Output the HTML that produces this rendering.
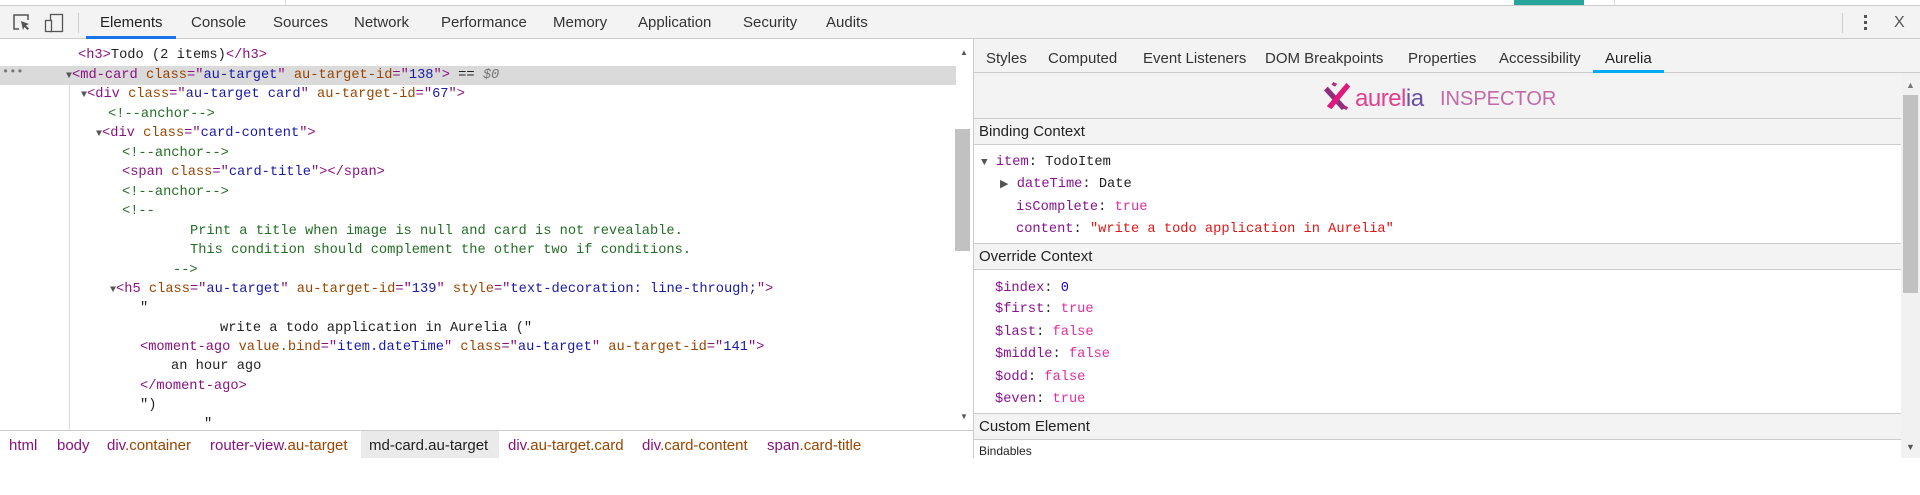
<!DOCTYPE html>
<html><head><meta charset="utf-8"><style>
*{margin:0;padding:0;box-sizing:border-box}
body{width:1920px;height:458px;overflow:hidden;background:#fff;position:relative;font-family:"Liberation Sans",sans-serif;}
.abs{position:absolute}
.tb{position:absolute;top:5px;left:0;width:1920px;height:34px;background:#f3f3f3;border-top:1px solid #ccc;border-bottom:1px solid #ccc}
.tab{position:absolute;top:14px;font-size:15px;color:#333}
.mono{font-family:"Liberation Mono",monospace;font-size:13.7px;white-space:pre}
.row{position:absolute;height:19.4px;line-height:19.4px}
.el .row{margin-top:2px}
.tg{color:#881280}.at{color:#994500}.av{color:#1a1aa6}.cm{color:#236e25}.tx{color:#222}
.tri{font-size:10px;color:#555}
.sec{position:absolute;left:974px;width:927px;height:27px;background:#f3f3f3;border-top:1px solid #ccc;border-bottom:1px solid #ccc;font-size:15px;line-height:25px;padding-left:5px;color:#222}
.k{color:#881391}.pk{color:#e0309e}.st{color:#e01616}.nb{color:#1c00cf}
.bc{position:absolute;top:437px;font-size:15px;color:#881280}
</style></head><body>
<div class="abs" style="left:285px;top:0;width:1px;height:5px;background:#ddd"></div>
<div class="abs" style="left:1514px;top:0;width:70px;height:5px;background:#26a69a"></div>
<div class="abs" style="left:1614px;top:0;width:1px;height:5px;background:#ddd"></div>
<div class="tb"></div>
<svg class="abs" style="left:12px;top:13px" width="20" height="20" viewBox="0 0 20 20"><path d="M7 16H2V2h14v5" fill="none" stroke="#555" stroke-width="1.5"/><path d="M9 8l8 3-3 1.5 3 3-1.5 1.5-3-3L11 17z" fill="#555"/></svg>
<svg class="abs" style="left:44px;top:13px" width="20" height="20" viewBox="0 0 20 20"><rect x="6.5" y="1.5" width="12" height="17" fill="none" stroke="#555" stroke-width="1.3"/><rect x="1.5" y="7.5" width="6" height="11" fill="#f3f3f3" stroke="#555" stroke-width="1.3"/></svg>
<div class="abs" style="left:78px;top:13px;width:1px;height:20px;background:#ccc"></div>
<div class="tab" style="left:100px;color:#222">Elements</div>
<div class="abs" style="left:86px;top:36px;width:90px;height:3px;background:#1a73e8"></div>
<div class="tab" style="left:191px">Console</div>
<div class="tab" style="left:273px">Sources</div>
<div class="tab" style="left:354px">Network</div>
<div class="tab" style="left:441px">Performance</div>
<div class="tab" style="left:553px">Memory</div>
<div class="tab" style="left:638px">Application</div>
<div class="tab" style="left:743px">Security</div>
<div class="tab" style="left:826px">Audits</div>
<div class="abs" style="left:1842px;top:13px;width:1px;height:20px;background:#ccc"></div>
<div class="abs" style="left:1864px;top:15px;width:3px;height:3px;background:#555;box-shadow:0 6px 0 #555,0 12px 0 #555"></div>
<div class="tab" style="left:1894px;top:14px;font-size:16px;color:#555">X</div>

<div class="abs" style="left:69px;top:85px;width:1px;height:345px;background:#ddd"></div>
<div class="abs" style="left:0;top:66px;width:956px;height:19.4px;background:#dadada"></div>
<div class="abs mono" style="left:2px;top:65px;color:#777;font-size:12px">•••</div>
<div class="mono el">
<div class="row" style="top:44px;left:78px"><span class="tg">&lt;h3&gt;</span><span class="tx">Todo (2 items)</span><span class="tg">&lt;/h3&gt;</span></div>
<div class="row" style="top:64px;left:66px"><span class="tri">▼</span><span class="tg">&lt;md-card</span> <span class="at">class</span><span class="tg">="</span><span class="av">au-target</span><span class="tg">"</span> <span class="at">au-target-id</span><span class="tg">="</span><span class="av">138</span><span class="tg">"&gt;</span><span class="tx"> == </span><span style="color:#777;font-style:italic">$0</span></div>
<div class="row" style="top:83px;left:81px"><span class="tri">▼</span><span class="tg">&lt;div</span> <span class="at">class</span><span class="tg">="</span><span class="av">au-target card</span><span class="tg">"</span> <span class="at">au-target-id</span><span class="tg">="</span><span class="av">67</span><span class="tg">"&gt;</span></div>
<div class="row cm" style="top:103px;left:108px">&lt;!--anchor--&gt;</div>
<div class="row" style="top:122px;left:96px"><span class="tri">▼</span><span class="tg">&lt;div</span> <span class="at">class</span><span class="tg">="</span><span class="av">card-content</span><span class="tg">"&gt;</span></div>
<div class="row cm" style="top:142px;left:122px">&lt;!--anchor--&gt;</div>
<div class="row" style="top:161px;left:122px"><span class="tg">&lt;span</span> <span class="at">class</span><span class="tg">="</span><span class="av">card-title</span><span class="tg">"&gt;&lt;/span&gt;</span></div>
<div class="row cm" style="top:181px;left:122px">&lt;!--anchor--&gt;</div>
<div class="row cm" style="top:200px;left:122px">&lt;!--</div>
<div class="row cm" style="top:220px;left:190px">Print a title when image is null and card is not revealable.</div>
<div class="row cm" style="top:239px;left:190px">This condition should complement the other two if conditions.</div>
<div class="row cm" style="top:259px;left:173px">--&gt;</div>
<div class="row" style="top:278px;left:110px"><span class="tri">▼</span><span class="tg">&lt;h5</span> <span class="at">class</span><span class="tg">="</span><span class="av">au-target</span><span class="tg">"</span> <span class="at">au-target-id</span><span class="tg">="</span><span class="av">139</span><span class="tg">"</span> <span class="at">style</span><span class="tg">="</span><span class="av">text-decoration: line-through;</span><span class="tg">"&gt;</span></div>
<div class="row tx" style="top:297px;left:140px">"</div>
<div class="row tx" style="top:317px;left:220px">write a todo application in Aurelia ("</div>
<div class="row" style="top:336px;left:140px"><span class="tg">&lt;moment-ago</span> <span class="at">value.bind</span><span class="tg">="</span><span class="av">item.dateTime</span><span class="tg">"</span> <span class="at">class</span><span class="tg">="</span><span class="av">au-target</span><span class="tg">"</span> <span class="at">au-target-id</span><span class="tg">="</span><span class="av">141</span><span class="tg">"&gt;</span></div>
<div class="row tx" style="top:355px;left:171px">an hour ago</div>
<div class="row tg" style="top:375px;left:140px">&lt;/moment-ago&gt;</div>
<div class="row tx" style="top:394px;left:140px">")</div>
<div class="row tx" style="top:413px;left:204px">"</div>
</div>
<div class="abs" style="left:958px;top:39px;width:15px;height:391px;background:#fff"></div>
<div class="abs" style="left:955px;top:129px;width:15px;height:122px;background:#c1c1c1"></div>
<div class="abs" style="left:960px;top:48px;font-size:8px;color:#555">▲</div>
<div class="abs" style="left:960px;top:412px;font-size:8px;color:#555">▼</div>
<div class="abs" style="left:973px;top:39px;width:1px;height:419px;background:#ccc"></div>

<div class="abs" style="left:0;top:430px;width:973px;height:28px;background:#fff;border-top:1px solid #ccc"></div>
<div class="abs" style="left:361px;top:431px;width:138px;height:27px;background:#eaeaea"></div>
<div class="bc" style="left:9px">html</div>
<div class="bc" style="left:57px">body</div>
<div class="bc" style="left:107px">div<span style="color:#994500">.container</span></div>
<div class="bc" style="left:210px">router-view<span style="color:#994500">.au-target</span></div>
<div class="bc" style="left:369px;color:#222">md-card.au-target</div>
<div class="bc" style="left:508px">div<span style="color:#994500">.au-target.card</span></div>
<div class="bc" style="left:642px">div<span style="color:#994500">.card-content</span></div>
<div class="bc" style="left:767px">span<span style="color:#994500">.card-title</span></div>

<div class="abs" style="left:974px;top:39px;width:946px;height:419px;background:#f3f3f3"></div>
<div class="abs" style="left:974px;top:72px;width:946px;height:1px;background:#ccc"></div>
<div class="tab" style="left:986px;top:50px">Styles</div>
<div class="tab" style="left:1048px;top:50px">Computed</div>
<div class="tab" style="left:1143px;top:50px">Event Listeners</div>
<div class="tab" style="left:1265px;top:50px">DOM Breakpoints</div>
<div class="tab" style="left:1408px;top:50px">Properties</div>
<div class="tab" style="left:1499px;top:50px">Accessibility</div>
<div class="tab" style="left:1605px;top:50px;color:#222">Aurelia</div>
<div class="abs" style="left:1593px;top:70px;width:71px;height:3px;background:#03a9f4"></div>
<svg class="abs" style="left:1324px;top:81px" width="28" height="30" viewBox="0 0 30 32"><path d="M4 6l20 22-5 3L0 10z" fill="#8e2f7e"/><path d="M24 2l4 4L8 30l-5-3z" fill="#e0187c"/><path d="M10 1l4 2-2 3-4-2zM22 26l4 2-2 3-4-2z" fill="#b7267d"/></svg>
<div class="abs" style="left:1355px;top:85px;font-size:24px;color:#e23f8f;letter-spacing:-0.5px">aurel<span style="color:#6a4fa5">ia</span></div>
<div class="abs" style="left:1440px;top:88px;font-size:20px;color:#c26aa8">INSPECTOR</div>

<div class="sec" style="top:118px">Binding Context</div>
<div class="abs" style="left:974px;top:145px;width:927px;height:98px;background:#fff"></div>
<div class="mono">
<div class="row" style="top:153px;left:981px"><span class="tri" style="font-size:11px">▼</span> <span class="k">item</span><span class="tx">: TodoItem</span></div>
<div class="row" style="top:175px;left:1000px"><span class="tri" style="font-size:11px">▶</span> <span class="k">dateTime</span><span class="tx">: Date</span></div>
<div class="row" style="top:198px;left:1016px"><span class="k">isComplete</span><span class="tx">: </span><span class="pk">true</span></div>
<div class="row" style="top:220px;left:1016px"><span class="k">content</span><span class="tx">: </span><span class="st">"write a todo application in Aurelia"</span></div>
</div>
<div class="sec" style="top:243px">Override Context</div>
<div class="abs" style="left:974px;top:270px;width:927px;height:143px;background:#fff"></div>
<div class="mono">
<div class="row" style="top:279px;left:995px"><span class="k">$index</span><span class="tx">: </span><span class="nb">0</span></div>
<div class="row" style="top:300px;left:995px"><span class="k">$first</span><span class="tx">: </span><span class="pk">true</span></div>
<div class="row" style="top:323px;left:995px"><span class="k">$last</span><span class="tx">: </span><span class="pk">false</span></div>
<div class="row" style="top:345px;left:995px"><span class="k">$middle</span><span class="tx">: </span><span class="pk">false</span></div>
<div class="row" style="top:368px;left:995px"><span class="k">$odd</span><span class="tx">: </span><span class="pk">false</span></div>
<div class="row" style="top:390px;left:995px"><span class="k">$even</span><span class="tx">: </span><span class="pk">true</span></div>
</div>
<div class="sec" style="top:413px">Custom Element</div>
<div class="abs" style="left:974px;top:440px;width:927px;height:18px;background:#fff;font-size:12px;padding-left:5px;line-height:22px;color:#222">Bindables</div>
<div class="abs" style="left:1901px;top:73px;width:19px;height:385px;background:#f1f1f1"></div>
<div class="abs" style="left:1903px;top:95px;width:15px;height:198px;background:#c1c1c1"></div>
<div class="abs" style="left:1906px;top:80px;font-size:9px;color:#777">▲</div>
<div class="abs" style="left:1906px;top:442px;font-size:9px;color:#555">▼</div>
</body></html>
